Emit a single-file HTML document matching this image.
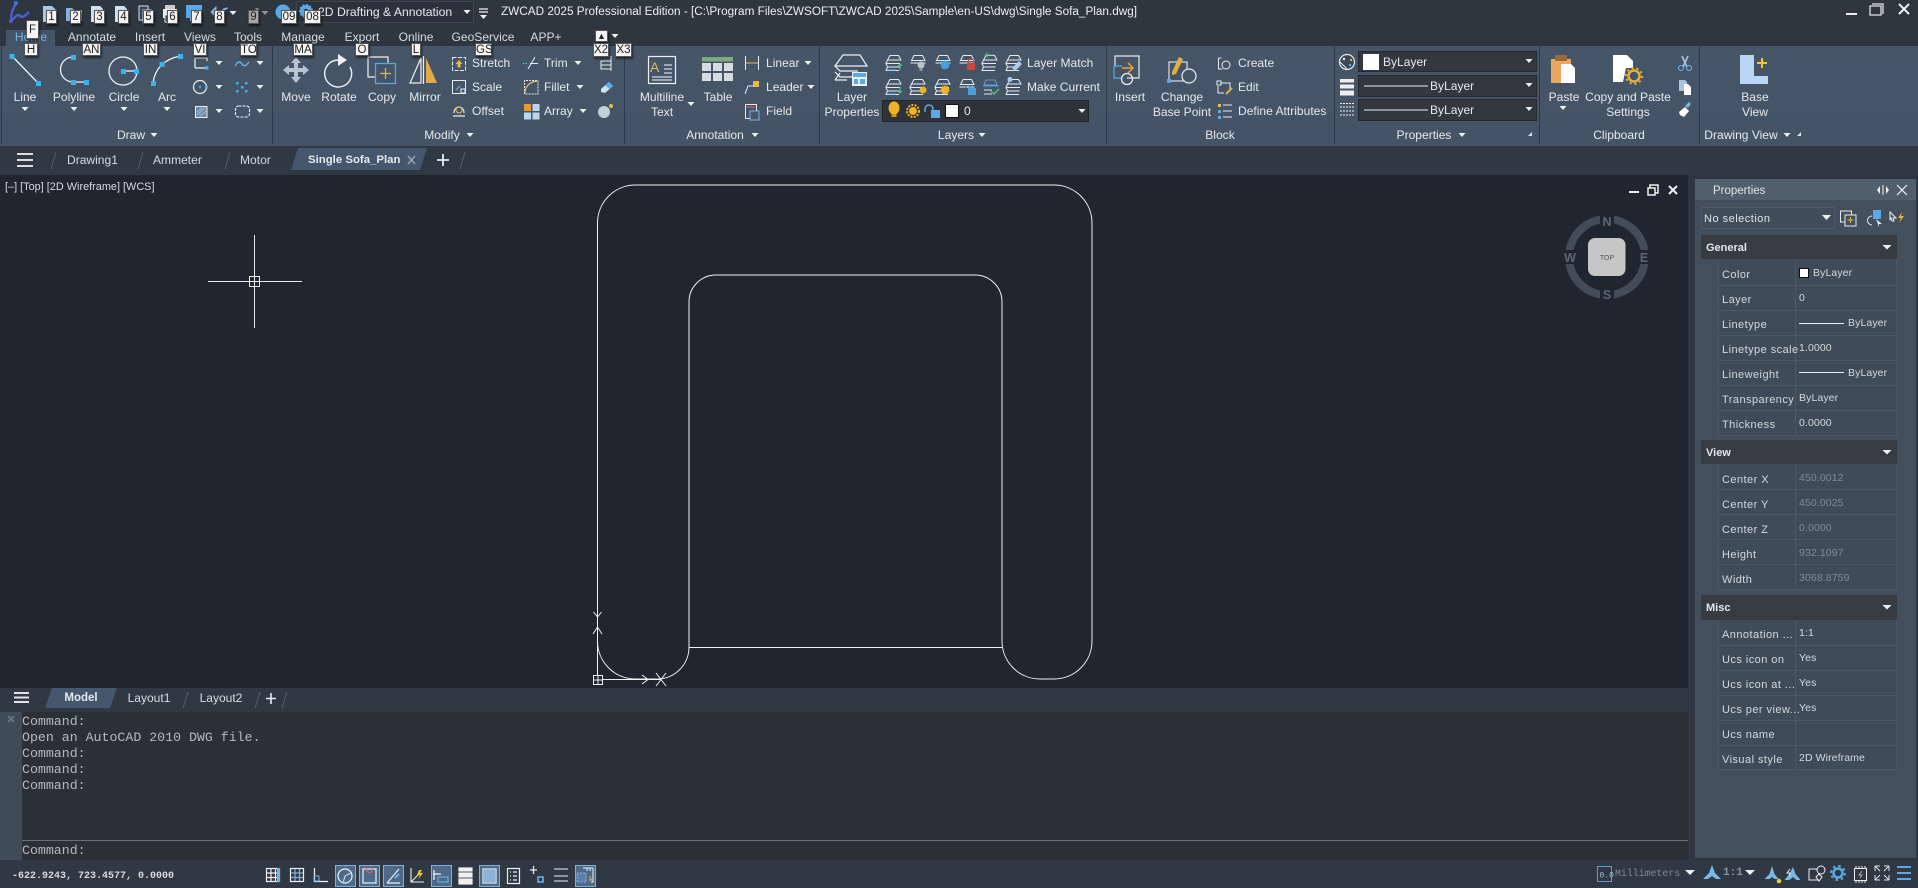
<!DOCTYPE html>
<html><head><meta charset="utf-8"><title>ZWCAD</title>
<style>
html,body{margin:0;padding:0;background:#2e3741}
body{position:relative;width:1918px;height:888px;overflow:hidden;font-family:"Liberation Sans",sans-serif;font-size:12.05px;color:#e6e9ec}
.b{position:absolute}
.c,.l{position:absolute;white-space:nowrap;line-height:14px}
.c{transform:translate(-50%,-50%)}
.l{transform:translateY(-50%)}
.k{position:absolute;background:#f4f4f4;color:#222;border:1px solid #555;box-shadow:1px 2px 2px rgba(0,0,0,.55);font-size:11.5px;line-height:12px;text-align:center;box-sizing:border-box;z-index:9}
.t{color:#d6dbe0;font-size:12.05px}
.p{font-size:11px;letter-spacing:.45px;color:#d3d8dd;margin-top:1px}
.v{font-size:10.5px;color:#d3d8dd;letter-spacing:.1px;margin-top:1px}
.g{color:#7e8996}
.h{font-size:11px;font-weight:bold;color:#e3e6e9;margin-top:1px}
.m{font-family:"Liberation Mono",monospace;font-size:13.25px;color:#b5b9bd;line-height:16px}
svg{position:absolute;left:0;top:0}
</style></head><body>
<div class="b" style="left:0;top:0;width:1918px;height:46px;background:#2e3640"></div>
<div class="b" style="left:6px;top:30px;width:49px;height:16px;background:#455466"></div>
<div class="b" style="left:0;top:46px;width:1918px;height:100px;background:linear-gradient(#465568,#445366)"></div>
<div class="b" style="left:0;top:146px;width:1918px;height:29px;background:#2f3843"></div>
<div class="b" style="left:0;top:175px;width:1688px;height:513px;background:#1f2630"></div>
<div class="b" style="left:0;top:688px;width:1688px;height:24px;background:#2f3843"></div>
<div class="b" style="left:0;top:712px;width:1688px;height:148px;background:#2b2f36"></div>
<div class="b" style="left:0;top:712px;width:22px;height:148px;background:#3f4b59"></div>
<div class="b" style="left:22px;top:840px;width:1666px;height:1px;background:#686e75"></div>
<div class="b" style="left:0;top:860px;width:1918px;height:28px;background:#2f3843"></div>
<div class="b" style="left:1695px;top:179px;width:221px;height:679px;background:#434f5d"></div>
<div class="b" style="left:1695px;top:179px;width:221px;height:21px;background:#515e6b"></div>
<div class="b" style="left:1718px;top:259px;width:179px;height:176px;background:#404b59"></div>
<div class="b" style="left:1718px;top:464px;width:179px;height:125px;background:#404b59"></div>
<div class="b" style="left:1718px;top:620px;width:179px;height:150px;background:#404b59"></div>
<div class="b" style="left:1701px;top:235px;width:196px;height:24px;background:#373c43"></div>
<div class="b" style="left:1701px;top:440px;width:196px;height:24px;background:#373c43"></div>
<div class="b" style="left:1701px;top:595px;width:196px;height:25px;background:#373c43"></div>
<div class="b" style="left:1701px;top:207px;width:134px;height:22px;background:#414d5b;border:1px solid #4f5b69;box-sizing:border-box"></div>
<div class="b" style="left:296px;top:1px;width:178px;height:22px;background:#2b323b;border:1px solid #3c444f;box-sizing:border-box"></div>
<div class="b" style="left:882px;top:100px;width:207px;height:22px;background:#2f3238;border:1px solid #22262b;box-sizing:border-box"></div>
<div class="b" style="left:1358px;top:51px;width:179px;height:21px;background:#33373e;border:1px solid #262a30;box-sizing:border-box"></div>
<div class="b" style="left:1358px;top:75px;width:179px;height:22px;background:#33373e;border:1px solid #262a30;box-sizing:border-box"></div>
<div class="b" style="left:1358px;top:99px;width:179px;height:22px;background:#33373e;border:1px solid #262a30;box-sizing:border-box"></div>

<svg width="1918" height="888" viewBox="0 0 1918 888" fill="none">
<defs>
<path id="a" d="M-3.5-2h7L0 2z" fill="#eef0f2"/>
<g id="s" stroke="#e8ebee" stroke-width="1"><path d="M-4-7.500h8.500l2.500 4.500h-13.500z"/><path d="M-6.500-3l-1.500 3.500h14M-8 .5l1.500 3.500h12M-6.500 4l-1.500 3.500h13"/></g>
<g id="ls" stroke="#e8ebee" stroke-width="1"><path d="M-4-4.500h8.500l2.500 5h-13.500z"/><path d="M-7.500 3h15"/></g>
</defs>
<!-- panel separators -->
<g stroke="#2f3843" stroke-width="1"><path d="M1.5 46v98M272.5 46v98M624.5 46v98M819.5 46v98M1106.5 46v98M1334.5 46v98M1539.5 46v98M1699.5 46v98"/></g>
<!-- logo -->
<path d="M16 3c-3 6-6 12-4 17 3-2 5-6 7-5 2 2 3 4 10-3" stroke="#4a5fd0" stroke-width="2.4"/><circle cx="16" cy="3" r="2" fill="#3f7ae0"/><circle cx="11" cy="21" r="2" fill="#5a55d8"/>
<!-- QAT -->
<g>
<path d="M43 6h9l4 4v12H43z" fill="#a9c9ea"/>
<path d="M66 8h6l2 2h8v11H66z" fill="#7fb2e0"/>
<path d="M91 6h9l3 3v13H91z" fill="#cfe0f0"/><rect x="95" y="15" width="8" height="7" fill="#4aa0dc"/>
<path d="M115 6h9l3 3v13h-12z" fill="#cfe0f0"/><rect x="120" y="14" width="9" height="8" fill="#4aa0dc"/>
<path d="M139 6h9v14h-9zM143 10h8v12h-8z" stroke="#d0e2f2" fill="#374452"/>
<path d="M163 9h14v9h-14z" fill="#e8ebee"/><rect x="165" y="5" width="10" height="4" fill="#ccc"/><rect x="165" y="15" width="10" height="7" fill="#39424d" stroke="#ddd"/>
<rect x="186" y="5" width="16" height="13" fill="#5aa9e6"/><rect x="190" y="18" width="8" height="3" fill="#aaa"/>
<path d="M222 13c-1-3 2-5 6-5M211 12l5-5v10z" stroke="#7fb2e0" fill="#7fb2e0" stroke-width="1"/>
<use href="#a" x="233" y="13"/>
<path d="M257 8v6" stroke="#7b858f" stroke-width="3"/>
<use href="#a" x="265" y="13" opacity=".5"/>
<circle cx="283" cy="12" r="7.5" fill="#5aa9e6"/>
<circle cx="306" cy="11" r="6" fill="#5aa9e6" stroke="#5aa9e6" stroke-dasharray="2 1.5" stroke-width="2"/>
<circle cx="306" cy="11" r="2.2" fill="#2e3640"/>
<use href="#a" x="467" y="12"/>
<path d="M479 9h9M479 12h9" stroke="#eee" stroke-width="1.2"/><use href="#a" x="483.500" y="17"/>
</g>
<!-- window controls -->
<path d="M1846 14h11" stroke="#eee" stroke-width="2"/>
<path d="M1872 4h11v10M1870 6h11v9h-11z" stroke="#dfe3e6" stroke-width="1.3"/>
<path d="M1899 4l10 10M1909 4l-10 10" stroke="#f2f2f2" stroke-width="2"/>
<use href="#a" x="615" y="36"/>
<!-- Draw -->
<g stroke="#eef0f2" stroke-width="1.3">
<path d="M12 56L38 83"/>
<path d="M73 57A12.500 12.500 0 0 0 73 82H87"/>
<circle cx="123" cy="71" r="14"/><path d="M123 71h14"/>
<path d="M153 83Q156 61 180 56"/>
<path d="M195 68V58h12v3M195 68h10" stroke-width="1.2"/>
<circle cx="200" cy="87" r="6.500" stroke-width="1.2"/>
<rect x="195.500" y="106.500" width="11.500" height="11" fill="#6d8aa9" stroke-width="1"/>
<path d="M197 115l8-7M197 112l5-4M200 116l6-5" stroke="#c0d4e8" stroke-width=".7"/>
<rect x="235.500" y="106" width="14" height="11" rx="3" stroke-dasharray="3 1.200" stroke-width="1.1"/>
</g>
<g fill="#38b3ef">
<rect x="9.500" y="54" width="5" height="5"/><rect x="36" y="81" width="5" height="5"/>
<rect x="71" y="55" width="5" height="5"/><rect x="71" y="80" width="5" height="5"/><rect x="84" y="80" width="5" height="5"/>
<rect x="121" y="69" width="5" height="5"/><rect x="134" y="69" width="5" height="5"/>
<rect x="151" y="81" width="5" height="5"/><rect x="159.500" y="62" width="5" height="5"/><rect x="178" y="54" width="5" height="5"/>
<rect x="205" y="66" width="3.500" height="3.500"/>
<circle cx="200" cy="87" r="1.200"/><rect x="205" y="85.500" width="3" height="3"/>
<rect x="236" y="82" width="2.500" height="2.500"/><rect x="245" y="82" width="2.500" height="2.500"/><rect x="241" y="86" width="2.500" height="2.500"/><rect x="236" y="90" width="2.500" height="2.500"/><rect x="245" y="90" width="2.500" height="2.500"/>
</g>
<path d="M235 66c3-5 5-5 7-2s4 2 7-2" stroke="#6eb8ea" stroke-width="1.3"/>
<use href="#a" x="25" y="109"/><use href="#a" x="74" y="109"/><use href="#a" x="124" y="109"/><use href="#a" x="167" y="109"/>
<use href="#a" x="219" y="63"/><use href="#a" x="219" y="87"/><use href="#a" x="219" y="111"/>
<use href="#a" x="260" y="63"/><use href="#a" x="260" y="87"/><use href="#a" x="260" y="111"/>
<use href="#a" x="154" y="135"/>
<!-- Modify -->
<path d="M296 57l-5 6h3v5h-5v-3l-6 5 6 5v-3h5v5h-3l5 6 5-6h-3v-5h5v3l6-5-6-5v3h-5v-5h3z" fill="#b8c4d2"/>
<path d="M338 60A13.500 13.500 0 1 0 350 67" stroke="#f0f2f4" stroke-width="1.4"/><path d="M338 54l9 6-9 6z" fill="#f0f2f4"/>
<path d="M388 63V57H368V77H375" stroke="#eef0f2" stroke-width="1.2"/>
<rect x="375.500" y="63.500" width="20" height="20" stroke="#58a8da" stroke-width="1.3"/>
<path d="M385.500 68v11M380 73.500h11" stroke="#e5b84a" stroke-width="1.2"/>
<path d="M410 83h11V58z" stroke="#eef0f2" stroke-width="1.2"/><path d="M423.500 56v28" stroke="#eef0f2" stroke-width="1.2"/><path d="M426 58l11 25h-11z" fill="#e3ab48"/>
<rect x="452.500" y="57.500" width="13" height="13" stroke="#e8ebee" stroke-dasharray="4 1.500"/><path d="M459 60l3.500 4h-2v3.500h-3V64h-2z" fill="#e5b84a"/>
<rect x="452.500" y="80.500" width="13" height="13" stroke="#e8ebee"/><rect x="461" y="89" width="4" height="4" stroke="#e8ebee" fill="#465568"/><path d="M456 90l4-4" stroke="#7fb2e0"/>
<path d="M453 116h12M454 113c0-8 10-8 10 0" stroke="#e8ebee" stroke-width="1.2"/><circle cx="459" cy="110" r="3" stroke="#e5b84a"/>
<path d="M523 63.500h5" stroke="#6eb8ea" stroke-dasharray="1.500 1"/><path d="M530 63.500h8M528 69l7-12" stroke="#e8ebee"/>
<path d="M524.500 94V80.500H538V94H524.500" stroke="#e8ebee" stroke-dasharray="2 1"/><path d="M525 93c0-7 5-11 12-12" stroke="#e5c97a" stroke-width="1.2"/>
<rect x="524" y="104" width="7" height="7" fill="#e69a2c"/><rect x="532.500" y="104" width="7" height="7" fill="#bcd6ee"/><rect x="524" y="112.500" width="7" height="7" fill="#bcd6ee"/><rect x="532.500" y="112.500" width="7" height="7" fill="#bcd6ee"/>
<use href="#a" x="578" y="63"/><use href="#a" x="580" y="87"/><use href="#a" x="583" y="111"/>
<path d="M601 61h10v8h-10zM601 65h10M611 56v15" stroke="#e8ebee"/>
<path d="M601 89l8-7 4 4-8 7-4-1z" fill="#cfe2f3"/><path d="M605 85l4-3 4 4-4 3z" fill="#5aa9e6"/>
<circle cx="604" cy="112" r="6" fill="#c4cfdc"/><circle cx="611" cy="106" r="2" fill="#e5c03a"/>
<use href="#a" x="470" y="135"/>
<!-- Annotation -->
<rect x="648.500" y="56.500" width="27" height="27" stroke="#eef0f2" stroke-width="1.2"/>
<path d="M664 65h8M664 69h8M664 73h8M652 77h20M652 80h20" stroke="#b9c3cf" stroke-width="1.5"/>
<text x="650" y="72" fill="#e5b84a" font-family="Liberation Sans" font-size="14">A</text>
<use href="#a" x="691" y="104"/>
<rect x="702" y="57" width="31" height="4.500" fill="#7faa80"/>
<g fill="#d7dbe0"><rect x="702" y="63" width="9" height="8"/><rect x="713" y="63" width="9" height="8"/><rect x="724" y="63" width="9" height="8"/><rect x="702" y="73" width="9" height="8"/><rect x="713" y="73" width="9" height="8"/><rect x="724" y="73" width="9" height="8"/></g>
<path d="M745.500 56v14M758.500 56v14" stroke="#e8ebee"/><path d="M746 63h12" stroke="#e5b84a"/>
<path d="M745 94l3-8h6" stroke="#e8ebee"/><rect x="753" y="81" width="6" height="6" fill="#e5b84a"/>
<rect x="745.500" y="104.500" width="11" height="14" stroke="#e8ebee"/><rect x="750" y="111" width="9" height="9" fill="#465568" stroke="#7fb2e0"/><path d="M747 107h8" stroke="#d66"/>
<use href="#a" x="808" y="63"/><use href="#a" x="811" y="87"/><use href="#a" x="755" y="135"/>
<!-- Layers -->
<g stroke="#eef0f2" stroke-width="1.2"><path d="M835 66l8-11h17l7 11z"/><path d="M835 66l5 5h18M835 72l5 5h12M835 80h12M840 73l-5 7 0 0"/></g>
<rect x="852" y="72" width="15" height="14" fill="#e9f1f8"/><rect x="853" y="73" width="13" height="4" fill="#5aa9e6"/><rect x="854" y="79" width="4" height="5" fill="#5aa9e6"/><rect x="860" y="79" width="5" height="5" fill="#5aa9e6"/>
<use href="#s" x="894" y="63"/><path d="M900 70v-6M898 66l2-2 2 2" stroke="#4ec48a"/><path d="M887 70h9" stroke="#5aa9e6"/>
<use href="#ls" x="918" y="60"/><circle cx="921" cy="65" r="3.500" fill="#b9c3cf"/><rect x="919.500" y="68" width="3" height="3" fill="#999"/>
<use href="#ls" x="943" y="60"/><circle cx="945" cy="65" r="4" fill="#4aa0dc" stroke="#4aa0dc" stroke-dasharray="1.500 1"/>
<use href="#ls" x="967" y="60"/><rect x="967" y="63" width="8" height="7" fill="#d0463d"/><path d="M968.500 63v-2a2.500 2.500 0 0 1 5 0v2" stroke="#d0463d"/>
<use href="#s" x="990" y="63"/><path d="M985 55h9M985 55l3-2M985 55l3 2" stroke="#4ec48a"/>
<use href="#s" x="1014" y="63"/><path d="M1012 68l7-7 3 3-7 7z" fill="#a9cdf0"/>
<use href="#s" x="894" y="87"/><path d="M900 87v6M898 91l2 2 2-2" stroke="#4ec48a"/><path d="M887 94h9" stroke="#5aa9e6"/>
<use href="#s" x="918" y="87"/><circle cx="923" cy="90" r="3.500" fill="#f0b422"/>
<use href="#s" x="943" y="87"/><circle cx="945" cy="90" r="4" fill="#f0b422" stroke="#f0b422" stroke-dasharray="1.500 1"/>
<use href="#ls" x="967" y="84"/><rect x="968" y="88" width="8" height="7" fill="#4aa0dc"/><path d="M965 88a3 3 0 0 1 5-1" stroke="#4aa0dc"/>
<g stroke="#5a9fd0"><path d="M984 85l2-5h9l2 5zM983 86h16"/></g><path d="M984 90h8M984 94h8" stroke="#e8ebee"/><path d="M991 91l3 3 5-5" stroke="#4ec48a" stroke-width="1.400"/>
<use href="#s" x="1014" y="87"/><circle cx="1010" cy="79.500" r="2.500" fill="#a9cdf0"/>
<!-- layer combo icons -->
<ellipse cx="894" cy="108" rx="5.500" ry="6.500" fill="#f0b422"/><rect x="891.500" y="114" width="5" height="3" fill="#d39a10"/>
<circle cx="913" cy="111" r="4" fill="#f0b422"/><circle cx="913" cy="111" r="6" stroke="#f0b422" stroke-width="2" stroke-dasharray="2 1.300"/>
<rect x="931" y="110" width="9" height="8" fill="#5aa9e6"/><path d="M925 112v-3a4 4 0 0 1 8 0v1" stroke="#5aa9e6" stroke-width="1.500"/>
<rect x="945.500" y="104.500" width="13" height="13" fill="#fff" stroke="#111"/>
<use href="#a" x="1082" y="111"/><use href="#a" x="982" y="135"/>
<!-- Block -->
<path d="M1115 66v-10h24v22h-12" stroke="#e8ebee" stroke-width="1.200"/><path d="M1121 78h-7V66h8" stroke="#5aa9e6" stroke-width="1.200"/><path d="M1122 68h10M1128 63l5 5-5 5" stroke="#e5a53a" stroke-width="1.500"/><circle cx="1127" cy="79" r="5.500" stroke="#e8ebee" stroke-width="1.300"/>
<rect x="1169" y="62" width="18" height="19" stroke="#e8ebee" stroke-width="1.100"/><circle cx="1189" cy="76" r="7" stroke="#e8ebee" stroke-width="1.200" fill="#465568"/><path d="M1172 72l7-15 4 2-7 15-4 1z" fill="#e5b03a"/><rect x="1167" y="79" width="4" height="4" fill="#5aa9e6"/>
<path d="M1218.500 58v11h4M1218.500 58h3" stroke="#e8ebee"/><circle cx="1226" cy="65" r="4" stroke="#e8ebee"/>
<rect x="1217" y="81" width="4" height="4" stroke="#e8ebee"/><path d="M1221 83h9v6M1218 86v7h6" stroke="#e8ebee"/><path d="M1226 94l6-6" stroke="#e5b03a" stroke-width="2"/>
<rect x="1218" y="104" width="3" height="3" fill="#e5c03a"/><rect x="1218" y="110" width="3" height="3" fill="#5aa9e6"/><rect x="1218" y="116" width="3" height="3" fill="#5aa9e6"/><path d="M1223 105h9M1223 111h9M1223 117h9" stroke="#e8ebee"/>
<!-- Properties -->
<circle cx="1347" cy="62" r="7.500" stroke="#e8ebee" stroke-width="1.200" fill="#3b4858"/><circle cx="1344" cy="59" r="1.200" fill="#e8ebee"/><circle cx="1351" cy="60" r="1.200" fill="#e5b03a"/><circle cx="1350" cy="65" r="1.200" fill="#5aa9e6"/><path d="M1340 62l7 7" stroke="#e8ebee"/>
<rect x="1340" y="79" width="14" height="3.500" fill="#eee"/><rect x="1340" y="84.500" width="14" height="4" fill="#eee"/><rect x="1340" y="90.500" width="14" height="5" fill="#eee"/>
<path d="M1340 103.500h14M1340 107h14M1340 111h14M1340 115h14" stroke="#eee" stroke-dasharray="2 1"/>
<rect x="1363" y="54" width="16" height="16" fill="#fff"/>
<path d="M1364 86h64M1364 110h64" stroke="#eee" stroke-width="1.100"/>
<use href="#a" x="1529" y="61"/><use href="#a" x="1529" y="85"/><use href="#a" x="1529" y="109"/>
<use href="#a" x="1462" y="135"/><path d="M1528 136l4-4v4z" fill="#dfe3e6"/>
<!-- Clipboard -->
<rect x="1551" y="59" width="20" height="24" fill="#eaa85e"/><rect x="1555" y="55" width="12" height="6" fill="#9b6a3a"/><path d="M1561 64h10l4 4v15h-14z" fill="#fff"/>
<path d="M1613 55h14l6 6v7h-7l-3 14h-10z" fill="#fff"/><circle cx="1634" cy="76" r="5.500" stroke="#e5b03a" stroke-width="2.500"/><circle cx="1634" cy="76" r="8" stroke="#e5b03a" stroke-width="2" stroke-dasharray="2 3"/>
<use href="#a" x="1563" y="108"/>
<path d="M1682 56l5 11M1688 56l-5 11" stroke="#a9c4de" stroke-width="1.600"/><circle cx="1681" cy="68" r="2.500" stroke="#6eb8ea"/><circle cx="1689" cy="68" r="2.500" stroke="#6eb8ea"/>
<path d="M1679 80h6l2 2v9h-8z" fill="#a9c4de"/><path d="M1684 84h4l3 3v8h-7z" fill="#fff"/>
<path d="M1679 112l6-5 4 4-5 6-4-2z" fill="#fff"/><path d="M1685 106l4-4 2 2-3 4z" fill="#6eb8ea"/>
<!-- Drawing view -->
<path d="M1740 55h14v21h14v8h-28z" fill="#b9d6f3"/><path d="M1762 58v10M1757 63h10" stroke="#f0c830" stroke-width="2"/>
<use href="#a" x="1787" y="135"/><path d="M1797 136l4-4v4z" fill="#dfe3e6"/>
<!-- doc tabs -->
<path d="M17 154h16M17 160h16M17 166h16" stroke="#d7dbe0" stroke-width="2"/>
<path d="M51 169l5-17M138 169l5-17M225 169l5-17M460 169l5-17" stroke="#56606b"/>
<path d="M298 148h129l-7 22H291z" fill="#45566f"/>
<path d="M408 156l7 8M415 156l-7 8" stroke="#98a3af" stroke-width="1.600"/>
<path d="M437 160h12M443 154v12" stroke="#eaedf0" stroke-width="1.800"/>
<!-- viewport controls -->
<path d="M1629 192h10" stroke="#eee" stroke-width="2"/>
<path d="M1650 188v-3h8v8h-3M1648 188h7v7h-7z" stroke="#eee" stroke-width="1.500"/>
<path d="M1669 186l8 8M1677 186l-8 8" stroke="#f2f2f2" stroke-width="2"/>
<!-- compass -->
<circle cx="1607" cy="257" r="38" stroke="#434c57" stroke-width="8"/>
<rect x="1600" y="212" width="14" height="14" fill="#1f2630"/><rect x="1600" y="288" width="14" height="14" fill="#1f2630"/><rect x="1562" y="250" width="14" height="14" fill="#1f2630"/><rect x="1638" y="250" width="14" height="14" fill="#1f2630"/>
<rect x="1588" y="238" width="37.500" height="38" rx="7" fill="#c6c6c6"/>
<text x="1607" y="260" text-anchor="middle" font-size="7" fill="#555" font-family="Liberation Sans">TOP</text>
<g font-family="Liberation Sans" font-size="12.500" font-weight="bold" fill="#5d6772" text-anchor="middle"><text x="1607" y="226">N</text><text x="1607" y="299">S</text><text x="1570" y="262">W</text><text x="1644" y="262">E</text></g>
<!-- crosshair -->
<path d="M208 281.500h94M254.500 235v93" stroke="#e6e8ea" stroke-width="1"/><rect x="249.500" y="276.500" width="10" height="10" stroke="#e6e8ea" fill="none"/>
<!-- drawing -->
<g stroke="#f0f1f2" stroke-width="1">
<path d="M597.500 641V223A38 38 0 0 1 635.500 185H1054A38 38 0 0 1 1092 223V641A38 38 0 0 1 1054 679H1040A38 38 0 0 1 1002 641V302A27 27 0 0 0 975 275H716A27 27 0 0 0 689 302V647A32 32 0 0 1 655 679H635.500A38 38 0 0 1 597.500 641Z"/>
<path d="M689 647.500H1002"/>
<path d="M597.500 679.500H661M642 675l6 4.500-6 4.500M656 673l10 13M666 673l-10 13"/>
<path d="M597.500 679V625M593 634l4.500-7 4.500 7M593.500 612l4 5 4-5M597.500 617v5"/>
<rect x="593.500" y="675.500" width="9" height="9" fill="#1f2630"/><path d="M598 675v9M593 680h9"/>
</g>
<!-- layout tabs -->
<path d="M14 693h15M14 697.500h15M14 702h15" stroke="#e0e3e6" stroke-width="2"/>
<path d="M52 688h65l-7 20H45z" fill="#45566f"/>
<path d="M183 708l5-16M255 708l5-16M282 708l5-16" stroke="#56606b"/>
<path d="M266 698.500h10M271 693v11" stroke="#e8ebee" stroke-width="1.600"/>
<path d="M8 716l6 6M14 716l-6 6" stroke="#69747f" stroke-width="1.800"/>
<!-- status icons -->
<g stroke="#eef0f2" stroke-width="1.200">
<rect x="266.500" y="868.500" width="13" height="13"/><path d="M271 869v12M275.500 869v12M267 873h12M267 877.500h12"/>
<rect x="290.500" y="868.500" width="13" height="13"/><path d="M295 869v12M299.500 869v12M291 873h12M291 877.500h12" stroke="#7fb2e0"/>
<path d="M314.500 868v13.500H328"/>
</g>
<rect x="277" y="868" width="3" height="14" fill="#6eb8ea"/><rect x="314" y="876" width="5" height="5" stroke="#7fb2e0"/>
<g fill="#4d6a8a" stroke="#7fb0d8" stroke-width="1"><rect x="335.500" y="865.500" width="20" height="21"/><rect x="359.500" y="865.500" width="20" height="21"/><rect x="383.500" y="865.500" width="20" height="21"/><rect x="431.500" y="865.500" width="20" height="21"/><rect x="479.500" y="865.500" width="20" height="21"/><rect x="575.500" y="865.500" width="20" height="21"/></g>
<g stroke="#eef0f2" stroke-width="1.200">
<circle cx="345" cy="876" r="7"/><path d="M345 876l6-3M345 876l-2 7" stroke="#c6d6e6"/>
<rect x="363" y="869" width="13" height="14"/><path d="M387 883l12-14M387 883h13"/>
<path d="M411 868v14h13M411 882l8-8" stroke-width="1.100"/>
<path d="M434 870v10h-0M433 874h8" stroke-width="1.300"/>
<rect x="459" y="868" width="13" height="3" fill="#eef0f2"/><rect x="459" y="873" width="13" height="4" fill="#eef0f2"/><rect x="459" y="879" width="13" height="5" fill="#eef0f2"/>
<rect x="483" y="869" width="13" height="14"/><rect x="507.500" y="868.500" width="12" height="15"/><path d="M510 872h1M513 872h4M510 876h1M513 876h4M510 880h1M513 880h4"/>
<path d="M530 870h7M533.500 866v8"/>
<path d="M554 869h14M554 881h14M554 876h14" stroke-width="1.100"/>
<path d="M583 868h10v14h-2M587 868v3M590 868v3" stroke-width="1"/>
</g>
<rect x="484" y="870" width="11" height="12" fill="#8cb4d8"/>
<rect x="438" y="877" width="10" height="5" fill="none" stroke="#6eb8ea"/>
<rect x="538" y="877" width="5" height="5" stroke="#6eb8ea" stroke-width="1.500"/>
<path d="M372 868a3 3 0 1 1-5 0" stroke="#d66" fill="none"/>
<path d="M395 878l4-4" stroke="#6eb8ea" stroke-width="2"/>
<path d="M419 870l-2 5h3l-2 5 5-7h-3l2-3z" fill="#f0c830"/>
<rect x="577" y="873" width="9" height="9" fill="#5a80a8" stroke="#8cb4d8" stroke-dasharray="2 1"/>
<path d="M591 879l2 2M590 881v-5" stroke="#e5c03a"/>
<!-- right status -->
<rect x="1597.500" y="866.500" width="14" height="15" stroke="#4f9ed8"/>
<text x="1599.500" y="877.500" font-family="Liberation Mono" font-size="8" fill="#9fc5e8">0.0</text>
<path d="M1685 870h10l-5 5z" fill="#eef0f2"/>
<path d="M1745 870h10l-5 5z" fill="#eef0f2"/>
<g fill="#79b9ea">
<path d="M1712 866l3 8 6 6-5 0-4-3-4 3-5 0 6-6z" transform="translate(0 -1)"/>
<path d="M1772 866l2.500 8 4 5h-4l-2.500-2-2.500 2h-5l5-5z"/><circle cx="1779" cy="881" r="2.300" fill="#f0c830"/>
<path d="M1793 867l2.500 7 5 6h-4l-3.500-3-3.500 3h-5l5-6z"/>
</g>
<path d="M1790 869l-3 4h3l-1 3" stroke="#eee"/>
<rect x="1809" y="869" width="10" height="11" stroke="#eef0f2"/><circle cx="1821" cy="870" r="4" stroke="#eef0f2" fill="#2f3843"/><path d="M1816 877l3-3 3 3-3 4z" stroke="#eef0f2" fill="#2f3843"/>
<circle cx="1838" cy="873" r="4.500" stroke="#5aa9e6" stroke-width="2.500"/><circle cx="1838" cy="873" r="7" stroke="#5aa9e6" stroke-width="2" stroke-dasharray="2.500 3"/>
<rect x="1854.500" y="868.500" width="12" height="12" stroke="#eef0f2"/><path d="M1856 866v2M1859 866v2M1862 866v2M1865 866v2M1856 881v2M1859 881v2M1862 881v2M1865 881v2" stroke="#eef0f2"/><path d="M1862 871l-3 4h3l-2 3" stroke="#aaa"/>
<path d="M1875 866h5M1875 866v5M1889 866h-5M1889 866v5M1875 880h5M1875 880v-5M1889 880h-5M1889 880v-5M1875 866l5 5M1889 866l-5 5M1875 880l5-5M1889 880l-5-5" stroke="#dfe3e6"/>
<path d="M1897 867h14M1897 873h14M1897 879h14" stroke="#5aa9e6" stroke-width="2"/>
<!-- properties panel -->
<path d="M1880 186v8l-3-4zM1886 186v8l3-4z" fill="#eee"/><path d="M1883 185v10" stroke="#eee" stroke-width="1"/>
<path d="M1897 185l10 10M1907 185l-10 10" stroke="#eef0f2" stroke-width="1.200"/>
<path d="M1822 215h9l-4.500 5z" fill="#eef0f2"/>
<rect x="1840.500" y="211" width="11" height="11" stroke="#e8ebee"/><rect x="1845" y="215" width="11" height="11" stroke="#e8ebee" fill="#434f5d"/><path d="M1850.500 217v6M1847.500 220h6" stroke="#e5b84a"/>
<rect x="1873" y="210" width="8" height="9" fill="#5aa9e6"/><path d="M1872 216a4.500 4.500 0 1 0 0 9" stroke="#e8ebee"/><path d="M1876 219l6 5-3 0 0 3z" fill="#e8ebee"/>
<path d="M1890 212l6 6-3 0 1 3-2 0-1-3-1 2z" stroke="#eef0f2"/><path d="M1902 212l-4 6h3l-2 5 5-7h-3z" fill="#f0b422"/>
<g fill="#eef0f2"><path d="M1882.500 245h9l-4.500 4.500z"/><path d="M1882.500 450h9l-4.500 4.500z"/><path d="M1882.500 605h9l-4.500 4.500z"/></g>
<g stroke="#4c5866" stroke-width="1">
<path d="M1718.500 259v176M1795.500 259v176M1896.500 259v176M1718 285.500h179M1718 310.500h179M1718 335.500h179M1718 360.500h179M1718 385.500h179M1718 410.500h179M1718 435.500h179"/>
<path d="M1718.500 464v125M1795.500 464v125M1896.500 464v125M1718 489.500h179M1718 514.500h179M1718 539.500h179M1718 564.500h179M1718 589.500h179"/>
<path d="M1718.500 620v150M1795.500 620v150M1896.500 620v150M1718 645.500h179M1718 670.500h179M1718 695.500h179M1718 720.500h179M1718 745.500h179M1718 769.500h179"/>
</g>
<rect x="1799.500" y="268.500" width="9" height="9" fill="#fff" stroke="#111"/>
<path d="M1799 323.500h45M1799 372.500h45" stroke="#e8ebee"/>
</svg>

<span class="l" style="left:318px;top:12px;font-size:12.2px">2D Drafting &amp; Annotation</span>
<span class="l" style="left:501px;top:12px;font-size:11.75px;color:#eceff1">ZWCAD 2025 Professional Edition - [C:\Program Files\ZWSOFT\ZWCAD 2025\Sample\en-US\dwg\Single Sofa_Plan.dwg]</span>
<span class="c" style="left:31px;top:37px;color:#6fb8ea">Home</span>
<span class="c t" style="left:92px;top:37px">Annotate</span>
<span class="c t" style="left:150px;top:37px">Insert</span>
<span class="c t" style="left:200px;top:37px">Views</span>
<span class="c t" style="left:248px;top:37px">Tools</span>
<span class="c t" style="left:303px;top:37px">Manage</span>
<span class="c t" style="left:362px;top:37px">Export</span>
<span class="c t" style="left:416px;top:37px">Online</span>
<span class="c t" style="left:483px;top:37px">GeoService</span>
<span class="c t" style="left:546px;top:37px">APP+</span>

<span class="c" style="left:25px;top:97px">Line</span><span class="c" style="left:74px;top:97px">Polyline</span><span class="c" style="left:124px;top:97px">Circle</span><span class="c" style="left:167px;top:97px">Arc</span>
<span class="c" style="left:131px;top:135px">Draw</span>
<span class="c" style="left:296px;top:97px">Move</span><span class="c" style="left:339px;top:97px">Rotate</span><span class="c" style="left:382px;top:97px">Copy</span><span class="c" style="left:425px;top:97px">Mirror</span>
<span class="l" style="left:472px;top:63px">Stretch</span><span class="l" style="left:472px;top:87px">Scale</span><span class="l" style="left:472px;top:111px">Offset</span>
<span class="l" style="left:544px;top:63px">Trim</span><span class="l" style="left:544px;top:87px">Fillet</span><span class="l" style="left:544px;top:111px">Array</span>
<span class="c" style="left:442px;top:135px">Modify</span>
<span class="c" style="left:662px;top:97px">Multiline</span><span class="c" style="left:662px;top:112px">Text</span><span class="c" style="left:718px;top:97px">Table</span>
<span class="l" style="left:766px;top:63px">Linear</span><span class="l" style="left:766px;top:87px">Leader</span><span class="l" style="left:766px;top:111px">Field</span>
<span class="c" style="left:715px;top:135px">Annotation</span>
<span class="c" style="left:852px;top:97px">Layer</span><span class="c" style="left:852px;top:112px">Properties</span>
<span class="l" style="left:1027px;top:63px">Layer Match</span><span class="l" style="left:1027px;top:87px">Make Current</span>
<span class="l" style="left:964px;top:111px">0</span>
<span class="c" style="left:956px;top:135px">Layers</span>
<span class="c" style="left:1130px;top:97px">Insert</span><span class="c" style="left:1182px;top:97px">Change</span><span class="c" style="left:1182px;top:112px">Base Point</span>
<span class="l" style="left:1238px;top:63px">Create</span><span class="l" style="left:1238px;top:87px">Edit</span><span class="l" style="left:1238px;top:111px">Define Attributes</span>
<span class="c" style="left:1220px;top:135px">Block</span>
<span class="l" style="left:1383px;top:62px">ByLayer</span><span class="l" style="left:1430px;top:86px">ByLayer</span><span class="l" style="left:1430px;top:110px">ByLayer</span>
<span class="c" style="left:1424px;top:135px">Properties</span>
<span class="c" style="left:1564px;top:97px">Paste</span><span class="c" style="left:1628px;top:97px">Copy and Paste</span><span class="c" style="left:1628px;top:112px">Settings</span>
<span class="c" style="left:1619px;top:135px">Clipboard</span>
<span class="c" style="left:1755px;top:97px">Base</span><span class="c" style="left:1755px;top:112px">View</span>
<span class="c" style="left:1741px;top:135px">Drawing View</span>

<span class="l t" style="left:67px;top:160px">Drawing1</span>
<span class="l t" style="left:153px;top:160px">Ammeter</span>
<span class="l t" style="left:240px;top:160px">Motor</span>
<span class="l" style="left:308px;top:160px;font-weight:bold;font-size:11.4px">Single Sofa_Plan</span>
<span class="l" style="left:5px;top:187px;font-size:10.9px;color:#d8dbde">[–] [Top] [2D Wireframe] [WCS]</span>

<span class="c" style="left:81px;top:698px;font-weight:bold;font-size:11.5px">Model</span>
<span class="c t" style="left:149px;top:698px">Layout1</span>
<span class="c t" style="left:221px;top:698px">Layout2</span>
<span class="l m" style="left:22px;top:722px">Command:</span>
<span class="l m" style="left:22px;top:738px">Open an AutoCAD 2010 DWG file.</span>
<span class="l m" style="left:22px;top:754px">Command:</span>
<span class="l m" style="left:22px;top:770px">Command:</span>
<span class="l m" style="left:22px;top:786px">Command:</span>
<span class="l m" style="left:22px;top:851px">Command:</span>
<span class="l" style="left:12px;top:877px;font-family:'Liberation Mono',monospace;font-size:10px;font-weight:bold;color:#d8dbde">-622.9243, 723.4577, 0.0000</span>
<span class="l" style="left:1615px;top:874px;font-family:'Liberation Mono',monospace;font-size:9.900px;color:#7d8a99">Millimeters</span>
<span class="l" style="left:1723px;top:873px;font-family:'Liberation Mono',monospace;font-size:11px;color:#8a95a1;font-weight:bold">1:1</span>

<span class="l" style="left:1713px;top:191px;font-size:11.5px;color:#dfe3e6">Properties</span>
<span class="l" style="left:1704px;top:219px;font-size:11px;letter-spacing:.5px;color:#dfe3e6">No selection</span>
<span class="l h" style="left:1706px;top:247px">General</span>
<span class="l h" style="left:1706px;top:452px">View</span>
<span class="l h" style="left:1706px;top:607px">Misc</span>

<span class="l p" style="left:1722px;top:274px">Color</span><span class="l v" style="left:1813px;top:272px">ByLayer</span>
<span class="l p" style="left:1722px;top:299px">Layer</span><span class="l v" style="left:1799px;top:297px">0</span>
<span class="l p" style="left:1722px;top:324px">Linetype</span><span class="l v" style="left:1848px;top:322px">ByLayer</span>
<span class="l p" style="left:1722px;top:349px">Linetype scale</span><span class="l v" style="left:1799px;top:347px">1.0000</span>
<span class="l p" style="left:1722px;top:374px">Lineweight</span><span class="l v" style="left:1848px;top:372px">ByLayer</span>
<span class="l p" style="left:1722px;top:399px">Transparency</span><span class="l v" style="left:1799px;top:397px">ByLayer</span>
<span class="l p" style="left:1722px;top:424px">Thickness</span><span class="l v" style="left:1799px;top:422px">0.0000</span>

<span class="l p" style="left:1722px;top:479px">Center X</span><span class="l v g" style="left:1799px;top:477px">450.0012</span>
<span class="l p" style="left:1722px;top:504px">Center Y</span><span class="l v g" style="left:1799px;top:502px">450.0025</span>
<span class="l p" style="left:1722px;top:529px">Center Z</span><span class="l v g" style="left:1799px;top:527px">0.0000</span>
<span class="l p" style="left:1722px;top:554px">Height</span><span class="l v g" style="left:1799px;top:552px">932.1097</span>
<span class="l p" style="left:1722px;top:579px">Width</span><span class="l v g" style="left:1799px;top:577px">3068.8759</span>

<span class="l p" style="left:1722px;top:634px">Annotation ...</span><span class="l v" style="left:1799px;top:632px">1:1</span>
<span class="l p" style="left:1722px;top:659px">Ucs icon on</span><span class="l v" style="left:1799px;top:657px">Yes</span>
<span class="l p" style="left:1722px;top:684px">Ucs icon at ...</span><span class="l v" style="left:1799px;top:682px">Yes</span>
<span class="l p" style="left:1722px;top:709px">Ucs per view...</span><span class="l v" style="left:1799px;top:707px">Yes</span>
<span class="l p" style="left:1722px;top:734px">Ucs name</span>
<span class="l p" style="left:1722px;top:759px">Visual style</span><span class="l v" style="left:1799px;top:757px">2D Wireframe</span>

<div class="k" style="left:26px;top:20px;width:13px;height:19px;line-height:19px">F</div>
<div class="k" style="left:46px;top:10px;width:11px;height:14px;line-height:13px">1</div>
<div class="k" style="left:70px;top:10px;width:11px;height:14px;line-height:13px">2</div>
<div class="k" style="left:94px;top:10px;width:11px;height:14px;line-height:13px">3</div>
<div class="k" style="left:118px;top:10px;width:11px;height:14px;line-height:13px">4</div>
<div class="k" style="left:143px;top:10px;width:11px;height:14px;line-height:13px">5</div>
<div class="k" style="left:167px;top:10px;width:11px;height:14px;line-height:13px">6</div>
<div class="k" style="left:191px;top:10px;width:11px;height:14px;line-height:13px">7</div>
<div class="k" style="left:214px;top:10px;width:11px;height:14px;line-height:13px">8</div>
<div class="k" style="left:248px;top:10px;width:11px;height:14px;line-height:13px;background:#a4a8ac">9</div>
<div class="k" style="left:281px;top:10px;width:16px;height:14px;line-height:13px">09</div>
<div class="k" style="left:304px;top:10px;width:17px;height:14px;line-height:13px">08</div>
<div class="k" style="left:24px;top:43px;width:14px;height:13px">H</div>
<div class="k" style="left:82px;top:43px;width:19px;height:13px">AN</div>
<div class="k" style="left:143px;top:43px;width:15px;height:13px">IN</div>
<div class="k" style="left:193px;top:43px;width:14px;height:13px">VI</div>
<div class="k" style="left:240px;top:43px;width:17px;height:13px">TO</div>
<div class="k" style="left:293px;top:43px;width:20px;height:13px">MA</div>
<div class="k" style="left:355px;top:43px;width:14px;height:13px">O</div>
<div class="k" style="left:411px;top:43px;width:10px;height:13px">L</div>
<div class="k" style="left:475px;top:43px;width:17px;height:13px">GS</div>
<div class="k" style="left:595px;top:30px;width:13px;height:12px;line-height:10px;font-size:9px">▲</div>
<div class="k" style="left:593px;top:43px;width:16px;height:14px">X2</div>
<div class="k" style="left:615px;top:43px;width:17px;height:14px">X3</div>
</body></html>
